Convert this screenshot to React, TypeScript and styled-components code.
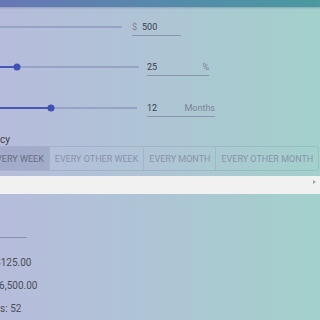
import styled, { createGlobalStyle } from 'styled-components';

const Global = createGlobalStyle`
	html, body {
		margin: 0;
		padding: 0;
		width: 320px;
		height: 320px;
		overflow: hidden;
	}
	body {
		font-family: Roboto, 'Liberation Sans', Arial, sans-serif;
		background: linear-gradient(to right, #b6bcdb, #aec5d5 50%, #a2d1cb);
	}
`;

type SliderRow = { width: number; fill: number; gap: number; field: number; value: string; start?: string; end?: string };

const rows: SliderRow[] = [
	{ width: 222, fill: 20, gap: 10, field: 49, value: '500', start: '$' },
	{ width: 239, fill: 49, gap: 8, field: 62, value: '25', end: '%' },
	{ width: 237, fill: 63.7, gap: 10, field: 68, value: '12', end: 'Months' },
];

const tabs = ['Every week', 'Every other week', 'Every month', 'Every other month'];

const results = [
	{ text: 'Payment: $125.00', shift: -49 },
	{ text: 'Total Paid: $6,500.00', shift: -56 },
	{ text: 'Number of Payments: 52', shift: -89 },
];

export default function App() {
	return (
		<>
			<Global />
			<Header />
			<Form>
				{rows.map((r) => (
					<Row key={r.value} $gap={r.gap}>
						<Track $w={r.width}>
							<Fill $pct={r.fill} />
							<Thumb $pct={r.fill} />
						</Track>
						<Field $w={r.field}>
							{r.start && <Adorn>{r.start}</Adorn>}
							<Value>{r.value}</Value>
							{r.end && <Adorn>{r.end}</Adorn>}
						</Field>
					</Row>
				))}
			</Form>
			<FreqLabel>Frequency</FreqLabel>
			<TabScroll>
				<TabGroup>
					{tabs.map((t, i) => (
						<Tab key={t} $active={i === 0}>
							{t}
						</Tab>
					))}
				</TabGroup>
			</TabScroll>
			<ScrollBar />
			<Summary>
				<SummaryField />
				{results.map((r) => (
					<Result key={r.text} $shift={r.shift}>
						{r.text}
					</Result>
				))}
			</Summary>
		</>
	);
}

const Header = styled.div`
	height: 7px;
	background: linear-gradient(to right, #6877b7, #5689ab 50%, #4a999f);
	box-shadow: 0 1px 2px rgba(40, 60, 90, 0.25);
`;

const Form = styled.div`
	display: flex;
	flex-direction: column;
	margin-left: -100px;
`;

const Row = styled.div<{ $gap: number }>`
	display: flex;
	align-items: center;
	height: 40px;
	gap: ${(p) => p.$gap}px;
	&:last-child {
		margin-top: 1px;
	}
`;

const Track = styled.div<{ $w: number }>`
	position: relative;
	width: ${(p) => p.$w}px;
	height: 2px;
	background: #97a2c4;
`;

const Fill = styled.div<{ $pct: number }>`
	width: ${(p) => p.$pct}%;
	height: 100%;
	background: #4858b4;
`;

const Thumb = styled.div<{ $pct: number }>`
	position: absolute;
	top: 50%;
	left: ${(p) => p.$pct}%;
	width: 7px;
	height: 7px;
	border-radius: 50%;
	background: #3f51b5;
	transform: translate(-50%, -50%);
`;

const Field = styled.div<{ $w: number }>`
	display: flex;
	align-items: center;
	gap: 5px;
	width: ${(p) => p.$w}px;
	height: 17px;
	border-bottom: 1px solid #8c95ad;
	font-size: 9px;
	color: #3a3d48;
`;

const Value = styled.span`
	flex: 1;
`;

const Adorn = styled.span`
	color: #7b8599;
`;

const FreqLabel = styled.div`
	margin: 6px 0 0 -36px;
	font-size: 10px;
	line-height: 12px;
	color: #3a3d48;
`;

const TabScroll = styled.div`
	padding-bottom: 5px;
	white-space: nowrap;
`;

const TabGroup = styled.div`
	display: inline-flex;
	height: 25px;
	margin-left: -15px;
	border: 1px solid rgba(60, 80, 110, 0.12);
	border-radius: 3px;
	box-sizing: border-box;
`;

const Tab = styled.div<{ $active: boolean }>`
	display: flex;
	align-items: center;
	padding: 0 5px;
	font-size: 9px;
	text-transform: uppercase;
	color: ${(p) => (p.$active ? '#676d80' : '#8a93a9')};
	background: ${(p) => (p.$active ? 'rgba(70, 80, 120, 0.16)' : 'transparent')};
	& + & {
		border-left: 1px solid rgba(60, 80, 110, 0.12);
	}
`;

const ScrollBar = styled.div`
	position: relative;
	height: 18px;
	background: #f1f1f1;

	&::after {
		content: '';
		position: absolute;
		right: 4px;
		top: 4px;
		border-left: 3px solid #a3a3a3;
		border-top: 2.5px solid transparent;
		border-bottom: 2.5px solid transparent;
	}
`;

const Summary = styled.div`
	display: flex;
	flex-direction: column;
	padding-top: 43px;
`;

const SummaryField = styled.div`
	width: 27px;
	height: 1px;
	margin-bottom: 13px;
	background: #8a91ab;
`;

const Result = styled.div<{ $shift: number }>`
	margin-left: ${(p) => p.$shift}px;
	font-size: 10px;
	line-height: 23px;
	white-space: nowrap;
	color: #4b4e58;
`;
